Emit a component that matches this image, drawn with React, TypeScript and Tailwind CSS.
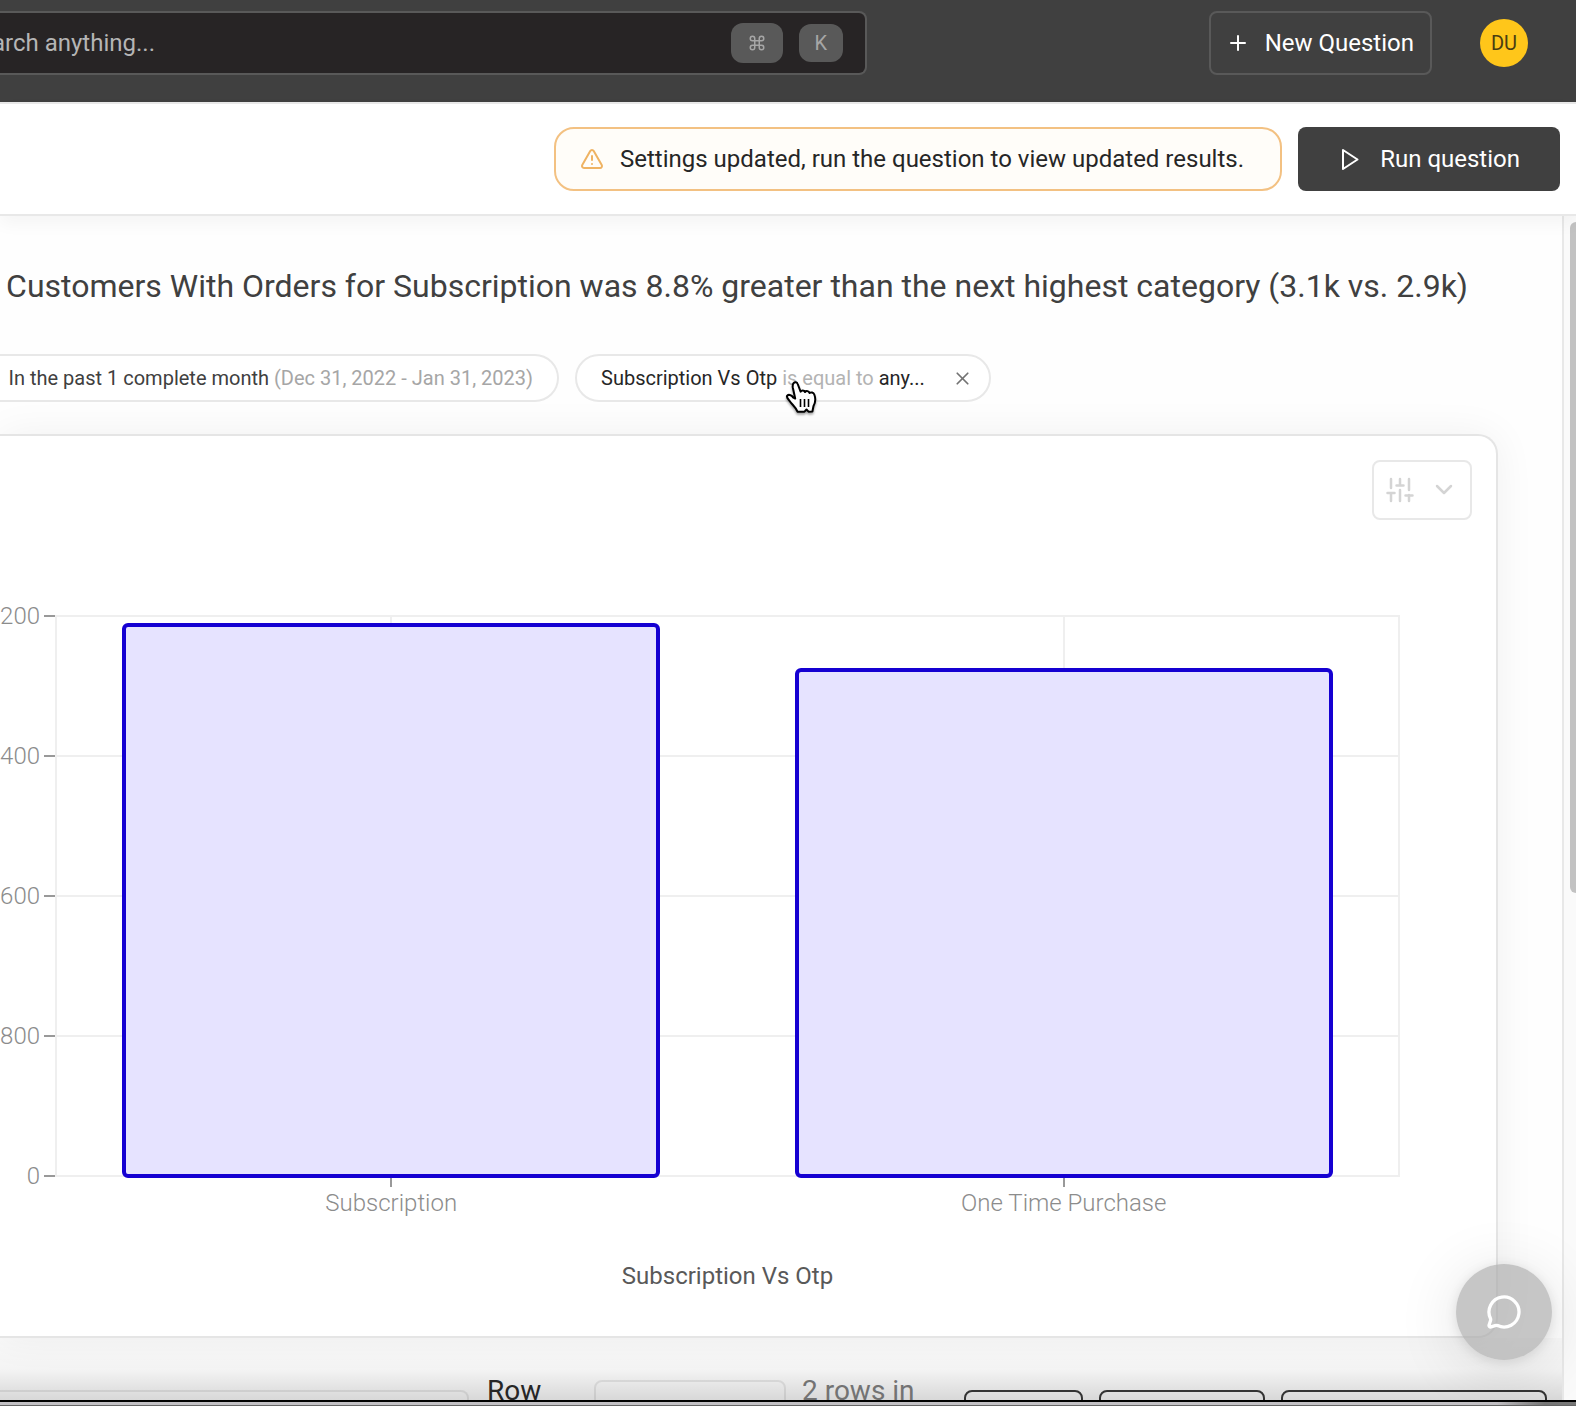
import React from "react";
import { Command, MessageCircle, Plus, TriangleAlert, X } from "lucide-react";

const yTicks = ["200", "400", "600", "800", "0"];

const bars = [
  { label: "Subscription", height: 98.5 },
  { label: "One Time Purchase", height: 90.6 },
];

function Header() {
  return (
    <header className="flex h-[102px] items-start bg-[#404040] pt-[11px]">
      <label className="flex h-16 w-[55%] shrink-0 items-center rounded-r-lg border-2 border-l-0 border-[#595959] bg-[#272425] pr-[22px]">
        <input
          type="text"
          aria-label="Search"
          placeholder="Search anything..."
          className="-ml-[35px] min-w-0 flex-1 bg-transparent text-2xl text-white outline-none placeholder:text-[#b5b5b5]"
        />
        <kbd className="mr-4 flex h-10 w-[52px] items-center justify-center rounded-xl bg-[#595959] text-[#a6a6a6]">
          <Command size={18} strokeWidth={2} />
        </kbd>
        <kbd className="flex h-[38px] w-11 items-center justify-center rounded-xl bg-[#595959] font-[Roboto] text-xl text-[#a6a6a6]">
          K
        </kbd>
      </label>
      <button className="ml-auto flex h-16 w-[223px] items-center justify-between rounded-lg border-2 border-[#595959] pr-4 pl-[15px] text-2xl whitespace-nowrap text-white">
        <Plus size={24} strokeWidth={2} />
        New Question
      </button>
      <button
        aria-label="Account"
        className="mx-12 mt-2 flex size-12 items-center justify-center rounded-full bg-[#ffc61a] text-xl text-[#4a3d12]"
      >
        DU
      </button>
    </header>
  );
}

function Toolbar() {
  return (
    <div className="relative z-10 flex h-[114px] items-center justify-end gap-4 border-y-2 border-[#e8e8e8] bg-white pr-4 shadow-[0_8px_16px_rgba(0,0,0,0.04)]">
      <div
        role="status"
        className="flex h-16 w-[728px] items-center rounded-[20px] border-2 border-[#f3c182] bg-[#fffdf9] pl-6 text-2xl whitespace-nowrap text-[#262626]"
      >
        <TriangleAlert size={24} strokeWidth={2} className="mr-4 shrink-0 text-[#efb363]" />
        Settings updated, run the question to view updated results.
      </div>
      <button className="flex h-16 w-[262px] items-center justify-between rounded-lg bg-[#404040] pr-10 pl-10 text-2xl whitespace-nowrap text-white">
        <svg width="24" height="24" viewBox="0 0 24 24" fill="none" stroke="currentColor" strokeWidth="2" strokeLinejoin="round">
          <path d="M5 3 L19.5 12.5 L5 22 Z" />
        </svg>
        Run question
      </button>
    </div>
  );
}

function Pointer() {
  return (
    <svg
      className="absolute top-6 left-[208px] drop-shadow-[0_2px_1px_rgba(0,0,0,0.35)]"
      width="34"
      height="34"
      viewBox="0 0 34 34"
      aria-hidden="true"
    >
      <path
        d="M8.6 3.2 C9.8 1.6 12 2 12.7 4 L15.6 11.6 C16.6 10 19 10 20 12 C21.4 10.400 23.8 11 24.500 13 C26 11.800 28.500 12.500 29.300 14.500 C30.800 18.500 30.500 22.500 28.500 26 L27.400 31.500 L23.500 31.700 L21.500 29.500 L19.500 31.700 L12.500 31.700 C11 27.500 7 24.500 5 21.500 C3.500 19.500 1.300 17.500 2 16 C3 14 6.500 14.800 8.300 17.600 L10.200 18.500 L7.800 7.500 C7.500 5.800 7.600 4.500 8.600 3.200 Z"
        fill="white"
        stroke="black"
        strokeWidth="2"
        strokeLinejoin="round"
      />
      <path d="M15.500 19 V27 M19.500 19 V27 M23.500 19 V27" stroke="black" strokeWidth="1.600" fill="none" />
    </svg>
  );
}

function Filters() {
  return (
    <div className="mt-12 flex gap-4 text-xl whitespace-nowrap">
      <button className="flex h-12 w-[559px] items-center justify-end rounded-r-full border-2 border-l-0 border-[#e8e8e8] bg-white pr-6 text-[#404040]">
        In the past 1 complete month&nbsp;<span className="text-[#a6a6a6]">(Dec 31, 2022 - Jan 31, 2023)</span>
      </button>
      <div className="relative flex h-12 w-[416px] items-center justify-between rounded-full border-2 border-[#e8e8e8] bg-white pr-4 pl-6 text-[#262626]">
        <button>
          Subscription Vs Otp <span className="text-[#b3b3b3]">is equal to</span> any...
        </button>
        <button aria-label="Remove filter" className="text-[#737373]">
          <X size={21} strokeWidth={2} />
        </button>
        <Pointer />
      </div>
    </div>
  );
}

function Chart() {
  return (
    <div className="mt-[95px] pr-24">
      <div className="flex">
        <div className="-my-[15px] flex w-[55px] shrink-0 flex-col justify-between text-2xl leading-8 font-light text-[#8c8c8c]">
          {yTicks.map((tick) => (
            <div key={tick} className="flex items-center justify-end gap-1">
              {tick}
              <span className="h-0.5 w-[11px] shrink-0 bg-[#999999]" />
            </div>
          ))}
        </div>
        <div className="relative h-[562px] flex-1">
          <div className="absolute inset-0 flex flex-col justify-between border-x-2 border-[#efefef]">
            {yTicks.map((tick) => (
              <div key={tick} className="h-0.5 bg-[#efefef]" />
            ))}
          </div>
          <div className="absolute inset-0 -bottom-px flex items-end">
            {bars.map((bar) => (
              <div key={bar.label} className="relative flex h-full flex-1 items-end justify-center">
                <div className="absolute inset-y-0 w-0.5 bg-[#efefef]" />
                <div
                  className="relative w-4/5 rounded-md border-4 border-[#1500d2] bg-[#e6e3ff]"
                  style={{ height: `${bar.height}%` }}
                />
              </div>
            ))}
          </div>
        </div>
      </div>
      <div className="flex pl-[55px] text-2xl leading-8 font-light text-[#8c8c8c]">
        {bars.map((bar) => (
          <div key={bar.label} className="flex flex-1 flex-col items-center">
            <span className="h-[10px] w-0.5 bg-[#999999]" />
            {bar.label}
          </div>
        ))}
      </div>
      <div className="mt-[41px] pl-[55px] text-center text-2xl leading-8 text-[#595959]">Subscription Vs Otp</div>
    </div>
  );
}

function ChartCard() {
  return (
    <section className="mt-8 mr-16 rounded-r-[20px] border-2 border-l-0 border-[#e5e5e5] bg-white pt-6 pb-11 shadow-[0_0_40px_rgba(0,0,0,0.06)]">
      <button
        aria-label="Chart settings"
        className="mr-6 ml-auto flex h-[60px] w-[100px] items-center rounded-lg border-2 border-[#e8e8e8] bg-white pl-3 text-[#d4d4d4]"
      >
        <svg width="28" height="28" viewBox="0 0 28 28" fill="none" stroke="currentColor" strokeWidth="2.500" strokeLinecap="round">
          <path d="M5 3V12M5 17V25M1.500 17H8.500M14 3V9M14 14V25M10.500 9.500H17.500M23 3V14M23 19V25M19.500 19.500H26.500" />
        </svg>
        <svg className="ml-5" width="20" height="20" viewBox="0 0 20 20" fill="none" stroke="currentColor" strokeWidth="2.500" strokeLinecap="round" strokeLinejoin="round">
          <path d="M3 6L10 13L17 6" />
        </svg>
      </button>
      <Chart />
    </section>
  );
}

function ResultsBar() {
  return (
    <div className="flex h-[62px] items-start overflow-hidden bg-linear-to-b from-black/2 via-black/4 to-black/15 pt-[35px] pr-[15px] text-[28px] leading-9 whitespace-nowrap">
      <div className="mt-[17px] h-12 w-[469px] rounded-tr-lg border-2 border-l-0 border-black/8" />
      <span className="ml-[18px] w-[107px] text-[#262626]">Row</span>
      <div className="mt-[7px] h-12 w-48 rounded-t-lg border-2 border-black/8" />
      <span className="ml-4 text-[#737373]">2 rows in</span>
      <div className="mt-[17px] ml-auto flex gap-4">
        <button aria-label="Copy" className="h-12 w-[119px] rounded-lg border-2 border-[#333333]" />
        <button aria-label="Export" className="h-12 w-[166px] rounded-lg border-2 border-[#333333]" />
        <button aria-label="View details" className="h-12 w-[266px] rounded-lg border-2 border-[#333333]" />
      </div>
    </div>
  );
}

export default function App() {
  return (
    <div className="relative overflow-hidden bg-white font-[Roboto,sans-serif]">
      <Header />
      <Toolbar />
      <div className="flex">
        <main className="min-w-0 flex-1 overflow-hidden border-r-2 border-[#e8e8e8] bg-[#fefefe]">
          <h1 className="mt-[50px] flex justify-end pr-[94px] text-[32px] leading-10 whitespace-nowrap text-[#404040]">
            Customers With Orders for Subscription was 8.8% greater than the next highest category (3.1k vs. 2.9k)
          </h1>
          <Filters />
          <ChartCard />
          <ResultsBar />
        </main>
        <div className="flex w-3 justify-end bg-[#fafafa] pt-[6px]">
          <div className="h-[671px] w-[6px] rounded-l-full bg-[#c2c2c2]" />
        </div>
      </div>
      <div className="h-[6px] border-t-2 border-b border-t-black border-b-[#666666] bg-linear-to-r from-[#c2c0c4] from-95% to-[#777777] to-98%" />
      <button
        aria-label="Open chat"
        className="absolute right-6 bottom-[46px] z-20 flex size-24 items-center justify-center rounded-full bg-[#a8a8a8]/65 text-white shadow-[0_2px_12px_rgba(0,0,0,0.1),0_8px_64px_rgba(0,0,0,0.12)]"
      >
        <MessageCircle size={36} strokeWidth={2.2} />
      </button>
    </div>
  );
}
